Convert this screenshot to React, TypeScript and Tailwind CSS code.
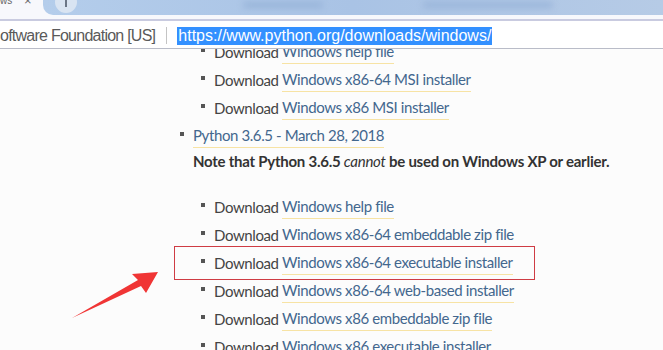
import React from 'react';

const content = '"Lato", "Open Sans", sans-serif';
const chrome = '"Liberation Sans", Arial, sans-serif';

function Bullet() {
  return <span className="inline-block w-[4px] h-[4px] bg-[#555] mr-[9px] translate-y-[-2px]" />;
}

function Link({ children }: { children: React.ReactNode }) {
  return (
    <span className="text-[#43678e] border-b border-[#f7e3a4] pb-[1px]">{children}</span>
  );
}

function DownloadRow({ label, boxed }: { label: string; boxed?: boolean }) {
  return (
    <li className="relative h-[28px] flex items-center pl-[201px]">
      <Bullet />
      <span className="text-[#444]">Download&nbsp;</span>
      <Link>{label}</Link>
      {boxed && (
        // red annotation box drawn over the row
        <span className="absolute left-[174px] w-[361px] top-[-3px] bottom-[-3px] border border-[#cf3c44]" />
      )}
    </li>
  );
}

export default function App() {
  return (
    <div className="w-[663px] h-[350px] overflow-hidden relative bg-[#fcfcfc]" style={{ fontFamily: content }}>
      {/* Tab strip */}
      <div className="h-[19px] flex items-start bg-[#f7f8fc]">
        <div className="w-[43px] h-[15px] relative text-[#666] text-[10px] leading-none" style={{ fontFamily: chrome }}>
          <span className="absolute left-[0px] top-[-4px]">ws</span>
          <span className="absolute left-[24px] top-[-6px] text-[13px]">×</span>
        </div>
        <div className="flex-1 h-[15px] rounded-bl-[10px] bg-gradient-to-r from-[#b4cdeb] via-[#a9c3e5] to-[#b6cbe6] relative overflow-hidden">
          <span className="absolute left-[12px] top-[-9px] w-[22px] h-[22px] rounded-full bg-[#d9e4f2]" />
          <span className="absolute left-[22px] top-[0px] w-[2px] h-[7px] bg-[#6b7686]" />
          <span className="absolute left-[200px] top-[2px] w-[80px] h-[6px] rounded-full bg-[#98b4d9] blur-[3px]" />
          <span className="absolute left-[380px] top-[2px] w-[130px] h-[6px] rounded-full bg-[#9ab5da] blur-[3px]" />
        </div>
      </div>
      <div className="h-[2px] bg-[#c9cbe0]" />

      {/* Address bar */}
      <div className="h-[27px] bg-white flex items-start pt-[6px] text-[16px] text-[#5a5a5a] whitespace-nowrap" style={{ fontFamily: chrome }}>
        <span className="tracking-[-0.75px] h-[18px] leading-[18px]">oftware Foundation [US]</span>
        <span className="ml-[11px] mr-[10px] w-px h-[17px] bg-[#c4c4c4]" />
        <span className="bg-[#3390ff] text-white px-[1px] h-[18px] leading-[18px]">https://www.python.org/downloads/windows/</span>
      </div>
      <div className="h-px bg-[#b9bcc8]" />

      {/* Page content */}
      <div className="overflow-hidden h-[301px] text-[15px] tracking-[-0.4px]">
        <ul className="-mt-[11px]">
          <DownloadRow label="Windows help file" />
          <DownloadRow label="Windows x86-64 MSI installer" />
          <DownloadRow label="Windows x86 MSI installer" />
          <li className="h-[28px] flex items-center pl-[180px]">
            <Bullet />
            <Link>Python 3.6.5 - March 28, 2018</Link>
          </li>
          <li className="pl-[193px] h-[23px] flex items-center text-[#333] font-bold mb-[20px] tracking-[-0.25px]">
            Note that Python 3.6.5&nbsp;<em className="font-normal">cannot</em>&nbsp;be used on Windows XP or earlier.
          </li>
          <DownloadRow label="Windows help file" />
          <DownloadRow label="Windows x86-64 embeddable zip file" />
          <DownloadRow label="Windows x86-64 executable installer" boxed />
          <DownloadRow label="Windows x86-64 web-based installer" />
          <DownloadRow label="Windows x86 embeddable zip file" />
          <DownloadRow label="Windows x86 executable installer" />
        </ul>
      </div>

      {/* Red annotation arrow */}
      <svg className="absolute left-0 top-0 pointer-events-none" width="663" height="350">
        <polygon points="158,272 132,274 138,280 72,318 141,286 146,293" fill="#f03535" />
      </svg>
    </div>
  );
}
